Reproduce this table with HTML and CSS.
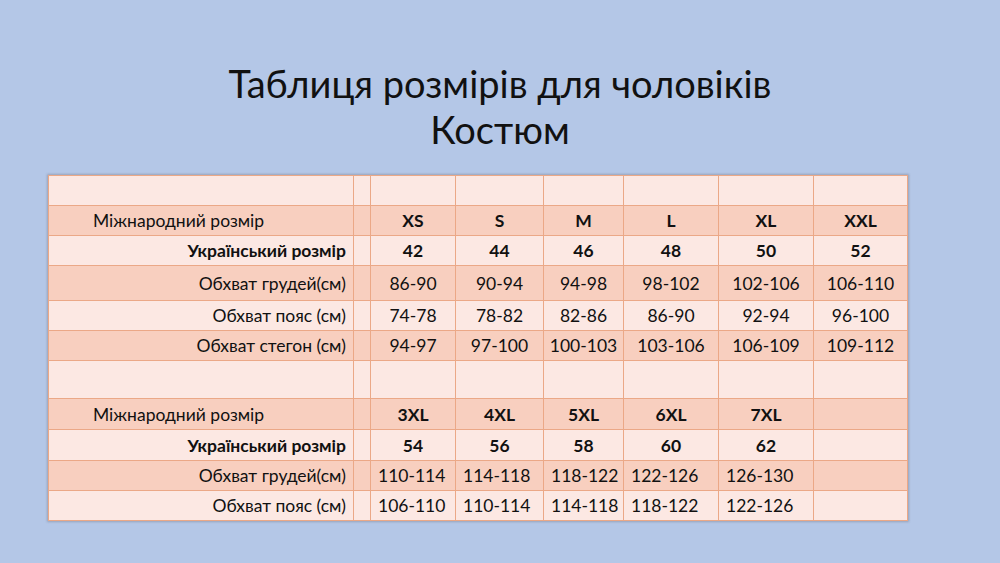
FILE: index.html
```html
<!DOCTYPE html>
<html lang="uk">
<head>
<meta charset="utf-8">
<title>Таблиця розмірів</title>
<link rel="stylesheet" href="styles.css">
</head>
<body>
<div class="slide">
  <h1 class="title"><span>Таблиця розмірів для чоловіків</span><span>Костюм</span></h1>
  <table class="sizes">
    <colgroup>
      <col class="c-label"><col class="c-gap"><col class="c1"><col class="c2"><col class="c3"><col class="c4"><col class="c5"><col class="c6">
    </colgroup>
    <tbody>
      <tr class="light h30"><td></td><td></td><td></td><td></td><td></td><td></td><td></td><td></td></tr>
      <tr class="dark h30 bold"><td class="intl">Міжнародний розмір</td><td></td><td>XS</td><td>S</td><td>M</td><td>L</td><td>XL</td><td>XXL</td></tr>
      <tr class="light h30 bold"><td class="lbl">Український розмір</td><td></td><td>42</td><td>44</td><td>46</td><td>48</td><td>50</td><td>52</td></tr>
      <tr class="dark h35"><td class="lbl">Обхват грудей(см)</td><td></td><td>86-90</td><td>90-94</td><td>94-98</td><td>98-102</td><td>102-106</td><td>106-110</td></tr>
      <tr class="light h30"><td class="lbl">Обхват пояс (см)</td><td></td><td>74-78</td><td>78-82</td><td>82-86</td><td>86-90</td><td>92-94</td><td>96-100</td></tr>
      <tr class="dark h30"><td class="lbl">Обхват стегон (см)</td><td></td><td>94-97</td><td>97-100</td><td>100-103</td><td>103-106</td><td>106-109</td><td>109-112</td></tr>
      <tr class="light h38"><td></td><td></td><td></td><td></td><td></td><td></td><td></td><td></td></tr>
      <tr class="dark h31 bold"><td class="intl">Міжнародний розмір</td><td></td><td>3XL</td><td>4XL</td><td>5XL</td><td>6XL</td><td>7XL</td><td></td></tr>
      <tr class="light h31 bold"><td class="lbl">Український розмір</td><td></td><td>54</td><td>56</td><td>58</td><td>60</td><td>62</td><td></td></tr>
      <tr class="dark h30 left"><td class="lbl">Обхват грудей(см)</td><td></td><td>110-114</td><td>114-118</td><td>118-122</td><td>122-126</td><td>126-130</td><td></td></tr>
      <tr class="light h30 left"><td class="lbl">Обхват пояс (см)</td><td></td><td>106-110</td><td>110-114</td><td>114-118</td><td>118-122</td><td>122-126</td><td></td></tr>
    </tbody>
  </table>
</div>
</body>
</html>
```

FILE: styles.css
```css
html, body {
  margin: 0;
  padding: 0;
}
body {
  background: #b4c7e7;
  font-family: Lato, "Open Sans", "Liberation Sans", sans-serif;
  color: #111;
}
.slide {
  width: 1000px;
  height: 563px;
  overflow: hidden;
  padding-top: 60px;
  box-sizing: border-box;
}
.title {
  margin: 0;
  font-weight: 400;
  font-size: 38px;
  line-height: 46px;
  text-align: center;
  display: flex;
  flex-direction: column;
  align-items: center;
}
.sizes {
  margin: 23px 0 0 48px;
  width: 859px;
  border-collapse: collapse;
  table-layout: fixed;
  font-size: 17.5px;
  box-shadow: 0 0 2px 1px rgba(120, 120, 130, 0.45);
}
.c-label { width: 305px; }
.c-gap { width: 17px; }
.c1 { width: 85px; }
.c2 { width: 88px; }
.c3 { width: 80px; }
.c4 { width: 95px; }
.c5 { width: 95px; }
.c6 { width: 94px; }
.sizes td {
  border: 1px solid #eba887;
  padding: 0 4px;
  text-align: center;
  white-space: nowrap;
  overflow: hidden;
}
.sizes tr.left td { text-align: left; padding-left: 7px; }
.sizes tr td.lbl { text-align: right; padding-right: 7px; padding-left: 4px; }
.sizes tr td.intl { text-align: left; padding-left: 44px; font-weight: 400; }
.sizes tr.bold td { font-weight: 700; }
.sizes tr.bold td.intl { font-weight: 400; }
.light td { background: #fce8e3; }
.dark td { background: #f8cfbf; }
.h30 { height: 30px; }
.h31 { height: 31px; }
.h35 { height: 35px; }
.h38 { height: 38px; }
```
